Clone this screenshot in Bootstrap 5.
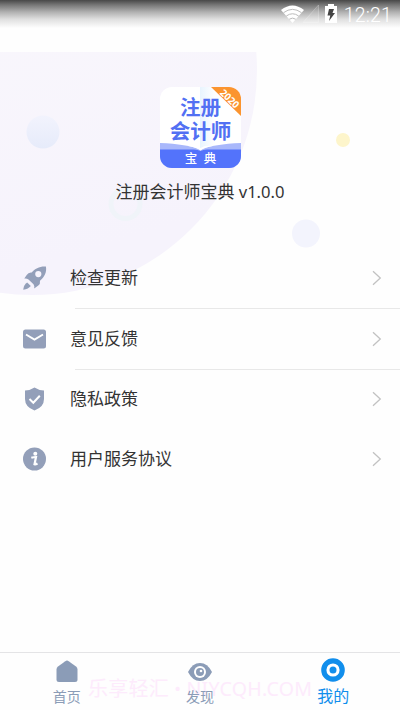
<!DOCTYPE html>
<html lang="zh-CN">
<head>
<meta charset="utf-8">
<meta name="viewport" content="width=device-width, initial-scale=1">
<title>注册会计师宝典</title>
<link rel="stylesheet" href="https://cdn.jsdelivr.net/npm/bootstrap@5.3.0/dist/css/bootstrap.min.css">
<style>
body{font-family:Roboto,"Noto Sans CJK SC",sans-serif;color:#333;background:#fefefe}
.screen{height:710px}
.statusbar{height:52px;background:linear-gradient(#484848 0,#777 5px,#b0b0b0 12px,#dedede 19px,#fefefe 28px);color:#fff}
.clock{font-size:19.5px;line-height:28px;font-weight:300;letter-spacing:.2px;padding-top:2px}
.status-icons{width:64px;height:28px}
.decor{left:0;top:52px;width:400px;height:250px}
.hero{height:196px;padding-top:35px}
.app-logo{width:81px;height:81px;display:block}
.app-name{font-size:17px;line-height:24px;margin-top:12px}
.app-name span{font-family:"Noto Sans",sans-serif;font-size:16.6px}
.menu-row{height:61px;background:transparent;color:#333;font-size:17px}
.menu-row.short{height:60px}
.menu-icon{width:24px;height:24px;margin:0 23px 2px;fill:#939fb9}
.rule-line{height:1px;background:#e8e8e8;margin-left:75px;margin-top:-1px}
.chevron{width:10px;height:16px;margin-right:18px;margin-bottom:2px}
.tabbar{height:58px;border-top:1px solid #e4e4e6}
.tab-item{width:133.33px;color:#8b9cb7;font-size:14px;line-height:20px;padding-top:5px}
.tab-item svg{width:26px;height:26px;display:block}
.tab-item span{margin-top:3px}
.tab-item.current{color:#118eec;font-size:16px}
.watermark{left:88px;bottom:9px;font-size:20px;line-height:24px;letter-spacing:.25px;color:#fdebfc;white-space:nowrap}
.watermark span{font-family:"Noto Sans",sans-serif;font-size:19.6px}
</style>
</head>
<body>
<main class="screen position-relative overflow-hidden d-flex flex-column">
  <header class="statusbar d-flex justify-content-end align-items-start pe-2">
    <svg class="status-icons" viewBox="280 0 64 28">
      <path d="M281 10Q292.500 1 304 10L292.500 23Z" fill="#fff"/>
      <path d="M283.500 12.700Q292.500 6 301.500 12.700M286.300 16Q292.500 11.500 298.700 16M289.300 19.200Q292.500 17 295.700 19.200" fill="none" stroke="#bbb" stroke-width="1"/>
      <path d="M303 22.500L318.500 5V22.500Z" fill="#fff" fill-opacity=".12" stroke="#fff" stroke-opacity=".35" stroke-width=".7"/>
      <path d="M325 6h3V4h6v2h3v17h-12Z" fill="#fff"/>
      <path d="M329 9h5l-1.500 4h2.500l-6 8 1.300-5.500h-2.800Z" fill="#444"/>
    </svg>
    <span class="clock">12:21</span>
  </header>

  <svg class="decor position-absolute" viewBox="0 52 400 250" aria-hidden="true">
    <defs>
      <linearGradient id="bigDisc" x1="0" y1="0" x2=".3" y2="1"><stop offset="0" stop-color="#fbf9fb"/><stop offset=".4" stop-color="#f9f7fc"/><stop offset="1" stop-color="#f6f3fc"/></linearGradient>
      <linearGradient id="ball" x1="0" y1="0" x2="0" y2="1"><stop offset="0" stop-color="#f2f3fd"/><stop offset="1" stop-color="#e6ebfa"/></linearGradient>
    </defs>
    <circle cx="32" cy="70" r="225" fill="url(#bigDisc)"/>
    <circle cx="43" cy="132" r="16.500" fill="url(#ball)"/>
    <circle cx="125.500" cy="204" r="14.500" fill="none" stroke="#f0f4f9" stroke-width="5"/>
    <circle cx="343" cy="140" r="7" fill="#fdf5cb"/>
    <circle cx="306" cy="233.500" r="14" fill="#f3f4fd"/>
  </svg>

  <section class="hero position-relative d-flex flex-column align-items-center">
    <svg class="app-logo" viewBox="0 0 81 81">
      <defs><clipPath id="tile"><rect width="81" height="81" rx="12"/></clipPath>
      <linearGradient id="fold"><stop offset="0" stop-color="#e8f4fe"/><stop offset="1" stop-color="#fff"/></linearGradient></defs>
      <g clip-path="url(#tile)">
        <rect width="81" height="81" fill="#fff"/>
        <rect x="40" width="15" height="62" fill="url(#fold)"/>
        <path d="M0 56Q27 57 40.500 62.500Q54 57 81 56V81H0Z" fill="#a9b8fb"/>
        <path d="M0 62.500H34Q38 62.500 40.500 64Q43 62.500 47 62.500H81V81H0Z" fill="#5373fb"/>
        <path d="M28 59Q36 60 40.500 63.500Q45 60 53 59Q45 58 40.500 61Q36 58 28 59Z" fill="#fff"/>
        <path d="M51 0H81V29Z" fill="#fb942f"/>
      </g>
      <g font-family="Noto Sans CJK SC, sans-serif" font-weight="700" text-anchor="middle">
        <text x="40.500" y="28" font-size="20.500" fill="#5270f3">注册</text>
        <text x="40.500" y="52" font-size="20.500" fill="#5270f3">会计师</text>
        <text x="31" y="75.500" font-size="12.500" font-weight="500" fill="#fff">宝</text>
        <text x="50" y="75.500" font-size="12.500" font-weight="500" fill="#fff">典</text>
        <text transform="translate(68 13.500) rotate(44)" font-family="Noto Sans, sans-serif" font-size="9.800" y="1" fill="#fff">2020</text>
      </g>
    </svg>
    <div class="app-name">注册会计师宝典 <span>v1.0.0</span></div>
  </section>

  <nav class="position-relative">
    <a class="menu-row d-flex align-items-center text-decoration-none" href="#">
      <svg class="menu-icon" viewBox="0 0 24 24"><path fill-rule="evenodd" d="M22.900 .5C17 0 12 2.500 8.700 6.500Q5.500 6 3.700 9L1.300 12.500Q3.500 12 5.500 13.500L10.500 18.200Q11.800 20 11.200 22.500L15.300 19.600Q17.500 18 17 14.800C21.500 11 24 6 22.900 .5ZM15.300 5a3.100 3.100 0 1 1 0 6.200a3.100 3.100 0 0 1 0-6.200Z"/><path d="M4.200 16.500L7.800 20Q5.500 23 .2 23.800Q.6 18.700 4.200 16.500Z"/></svg>
      <span>检查更新</span>
      <svg class="chevron ms-auto" viewBox="0 0 10 16"><path d="M1 1.200L8.300 8L1 14.800" fill="none" stroke="#c2c2c2" stroke-width="1.300"/></svg>
    </a>
    <div class="rule-line"></div>
    <a class="menu-row d-flex align-items-center text-decoration-none" href="#">
      <svg class="menu-icon" viewBox="0 0 24 24"><rect x="0" y="2.500" width="23" height="19" rx="2.500"/><path d="M3 7.500L11.500 12.500L20 7.500" fill="none" stroke="#fff" stroke-width="2"/></svg>
      <span>意见反馈</span>
      <svg class="chevron ms-auto" viewBox="0 0 10 16"><path d="M1 1.200L8.300 8L1 14.800" fill="none" stroke="#c2c2c2" stroke-width="1.300"/></svg>
    </a>
    <div class="rule-line"></div>
    <a class="menu-row short d-flex align-items-center text-decoration-none" href="#">
      <svg class="menu-icon" viewBox="0 0 24 24"><path d="M11.500 .5Q16 3.500 21 3.500V12Q21 20 11.500 23.500Q2 20 2 12V3.500Q7 3.500 11.500 .5Z"/><path d="M6.500 12L10.300 15.700L16.800 8.700" fill="none" stroke="#fff" stroke-width="2"/></svg>
      <span>隐私政策</span>
      <svg class="chevron ms-auto" viewBox="0 0 10 16"><path d="M1 1.200L8.300 8L1 14.800" fill="none" stroke="#c2c2c2" stroke-width="1.300"/></svg>
    </a>
    <a class="menu-row short d-flex align-items-center text-decoration-none" href="#">
      <svg class="menu-icon" viewBox="0 0 24 24"><circle cx="11.500" cy="12" r="11.500"/><circle cx="12.300" cy="6.700" r="2" fill="#fff"/><path d="M8.300 10.800Q11 10 13 10L11.500 17.200Q12.500 17.600 14.500 16.500" fill="none" stroke="#fff" stroke-width="2.200"/></svg>
      <span>用户服务协议</span>
      <svg class="chevron ms-auto" viewBox="0 0 10 16"><path d="M1 1.200L8.300 8L1 14.800" fill="none" stroke="#c2c2c2" stroke-width="1.300"/></svg>
    </a>
  </nav>

  <footer class="tabbar mt-auto d-flex position-relative">
    <div class="watermark position-absolute">乐享轻汇 • <span>NIYCQH.COM</span></div>
    <div class="tab-item position-relative d-flex flex-column align-items-center">
      <svg viewBox="0 0 26 26"><path d="M4 8.500L11.300 3.200Q13 2 14.700 3.200L22 8.500Q23.500 9.700 23.500 11.500V21.500Q23.500 24 21 24H5Q2.500 24 2.500 21.500V11.500Q2.500 9.700 4 8.500Z" fill="#8b9cb7"/></svg>
      <span>首页</span>
    </div>
    <div class="tab-item position-relative d-flex flex-column align-items-center">
      <svg viewBox="0 0 26 26"><path d="M1 14Q5.500 5 13 5T25 14Q20.500 23 13 23T1 14Z" fill="#8b9cb7"/><circle cx="13" cy="14" r="6" fill="#fff"/><circle cx="13" cy="14" r="4" fill="#8b9cb7"/><circle cx="14" cy="13" r="1.300" fill="#fff"/></svg>
      <span>发现</span>
    </div>
    <div class="tab-item current position-relative d-flex flex-column align-items-center">
      <svg viewBox="0 0 26 26"><circle cx="13" cy="12" r="9.200" fill="#fff" stroke="#118eec" stroke-width="5.200"/><circle cx="13" cy="12" r="3.500" fill="#118eec"/></svg>
      <span>我的</span>
    </div>
  </footer>
</main>
<script src="https://cdn.jsdelivr.net/npm/bootstrap@5.3.0/dist/js/bootstrap.bundle.min.js"></script>
</body>
</html>
